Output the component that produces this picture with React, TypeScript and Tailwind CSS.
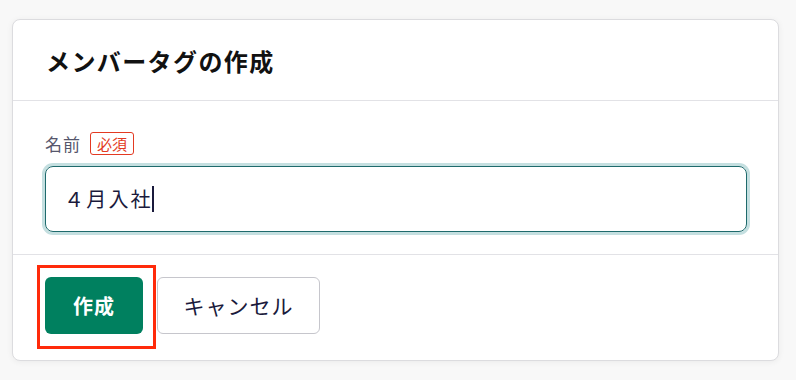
import React from "react";

const jp = { fontFamily: '"Noto Sans CJK JP", "Noto Sans", sans-serif' };

export default function App() {
  return (
    <div className="w-[796px] h-[380px] bg-[#f8f8f8] pl-[12px] pt-[19px]" style={jp}>
      <div className="w-[767px] h-[342px] bg-white border border-[#dcdcdf] rounded-[8px] shadow-[0_1px_6px_rgba(0,0,0,0.06)] flex flex-col">
        <div className="h-[81px] border-b border-[#e2e2e6] flex items-center pl-[33px] pt-[2px]">
          <h1 className="text-[24px] font-bold text-[#111] tracking-[1.4px] leading-none">メンバータグの作成</h1>
        </div>
        <div className="h-[154px] border-b border-[#e2e2e6] pl-[32px] pr-[31px] pt-[30px]">
          <div className="flex items-center gap-[9px] h-[24px]">
            <span className="text-[17px] text-[#56566c] tracking-[1px] leading-none">名前</span>
            <span className="h-[23px] px-[6px] flex items-center border border-[#e33a22] rounded-[3px] text-[15px] text-[#e33a22] leading-none">必須</span>
          </div>
          <div className="mt-[11px] h-[66px] rounded-[8px] border-[1.5px] border-[#1e6a6c] shadow-[0_0_0_3px_#c4dfe0] flex items-center pl-[18px]">
            <span className="text-[20px] text-[#1a1a3c] tracking-[2.2px] leading-none">４月入社</span>
            <span className="w-[2px] h-[26px] bg-[#1a1a3c] -ml-[1px]"></span>
          </div>
        </div>
        <div className="flex items-start gap-[14px] pl-[32px] pt-[22px]">
          <div className="relative">
            <button className="w-[98px] h-[57px] rounded-[6px] bg-[#00805f] text-white text-[20px] font-bold tracking-[1px]">作成</button>
            <div className="absolute left-[-8px] top-[-12px] w-[119px] h-[84px] border-[3.5px] border-[#ff2a0a]"></div>
          </div>
          <button className="w-[163px] h-[57px] rounded-[6px] bg-white border border-[#c6c6cc] text-[#1a1a3c] text-[21px] tracking-[1px]">キャンセル</button>
        </div>
      </div>
    </div>
  );
}
